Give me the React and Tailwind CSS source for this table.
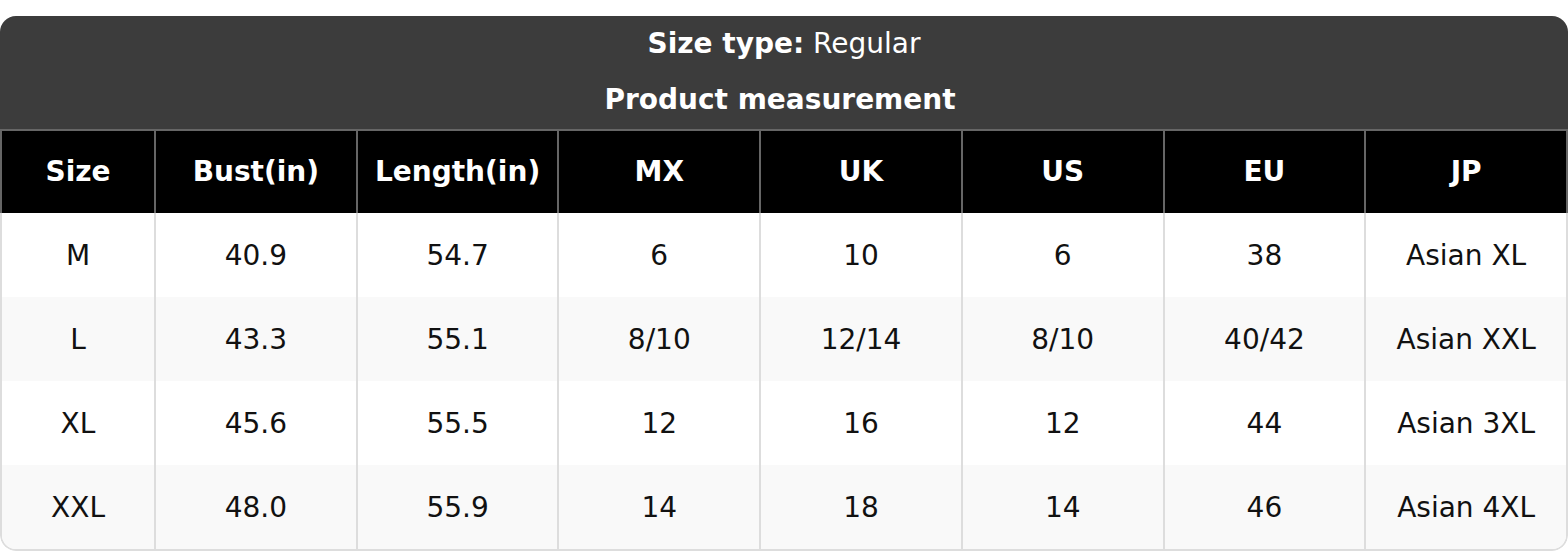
import React from 'react';

const HEAD = ['Size', 'Bust(in)', 'Length(in)', 'MX', 'UK', 'US', 'EU', 'JP'];
const ROWS = [
    ['M', '40.9', '54.7', '6', '10', '6', '38', 'Asian XL'],
    ['L', '43.3', '55.1', '8/10', '12/14', '8/10', '40/42', 'Asian XXL'],
    ['XL', '45.6', '55.5', '12', '16', '12', '44', 'Asian 3XL'],
    ['XXL', '48.0', '55.9', '14', '18', '14', '46', 'Asian 4XL'],
];

const GRID = 'grid grid-cols-[152px_repeat(7,1fr)]';

export default function App() {
    return (
        <div className="bg-white pt-4 w-[1568px] h-[552px] text-[28px]" style={{ fontFamily: '"DejaVu Sans", Verdana, sans-serif' }}>
            <div className="rounded-[16px] overflow-hidden">
                {/* Title */}
                <div className="bg-[#3c3c3c] text-white">
                    <div className="h-[56px] flex items-center justify-center">
                        <span className="font-bold">Size type:</span>&nbsp;<span>Regular</span>
                    </div>
                    <div className="h-[57px] pb-[2px] pr-2 flex items-center justify-center font-bold">Product measurement</div>
                </div>

                {/* Header */}
                <div className={`${GRID} bg-black text-white font-bold border-t-2 border-x-2 border-[#666]`}>
                    {HEAD.map((h, i) => (
                        <div key={h} className={`h-[82px] flex items-center justify-center ${i ? 'border-l-2 border-[#666]' : ''}`}>{h}</div>
                    ))}
                </div>

                {/* Body */}
                <div className="border-x-2 border-b-2 border-[#ddd] rounded-b-[16px] overflow-hidden text-[#111]">
                    {ROWS.map((r, ri) => (
                        <div key={r[0]} className={`${GRID} ${ri % 2 ? 'bg-[#f9f9f9]' : 'bg-white'}`}>
                            {r.map((c, i) => (
                                <div key={i} className={`h-[84px] pt-[2px] flex items-center justify-center ${i ? 'border-l-2 border-[#ddd]' : ''}`}>{c}</div>
                            ))}
                        </div>
                    ))}
                </div>
            </div>
        </div>
    );
}
